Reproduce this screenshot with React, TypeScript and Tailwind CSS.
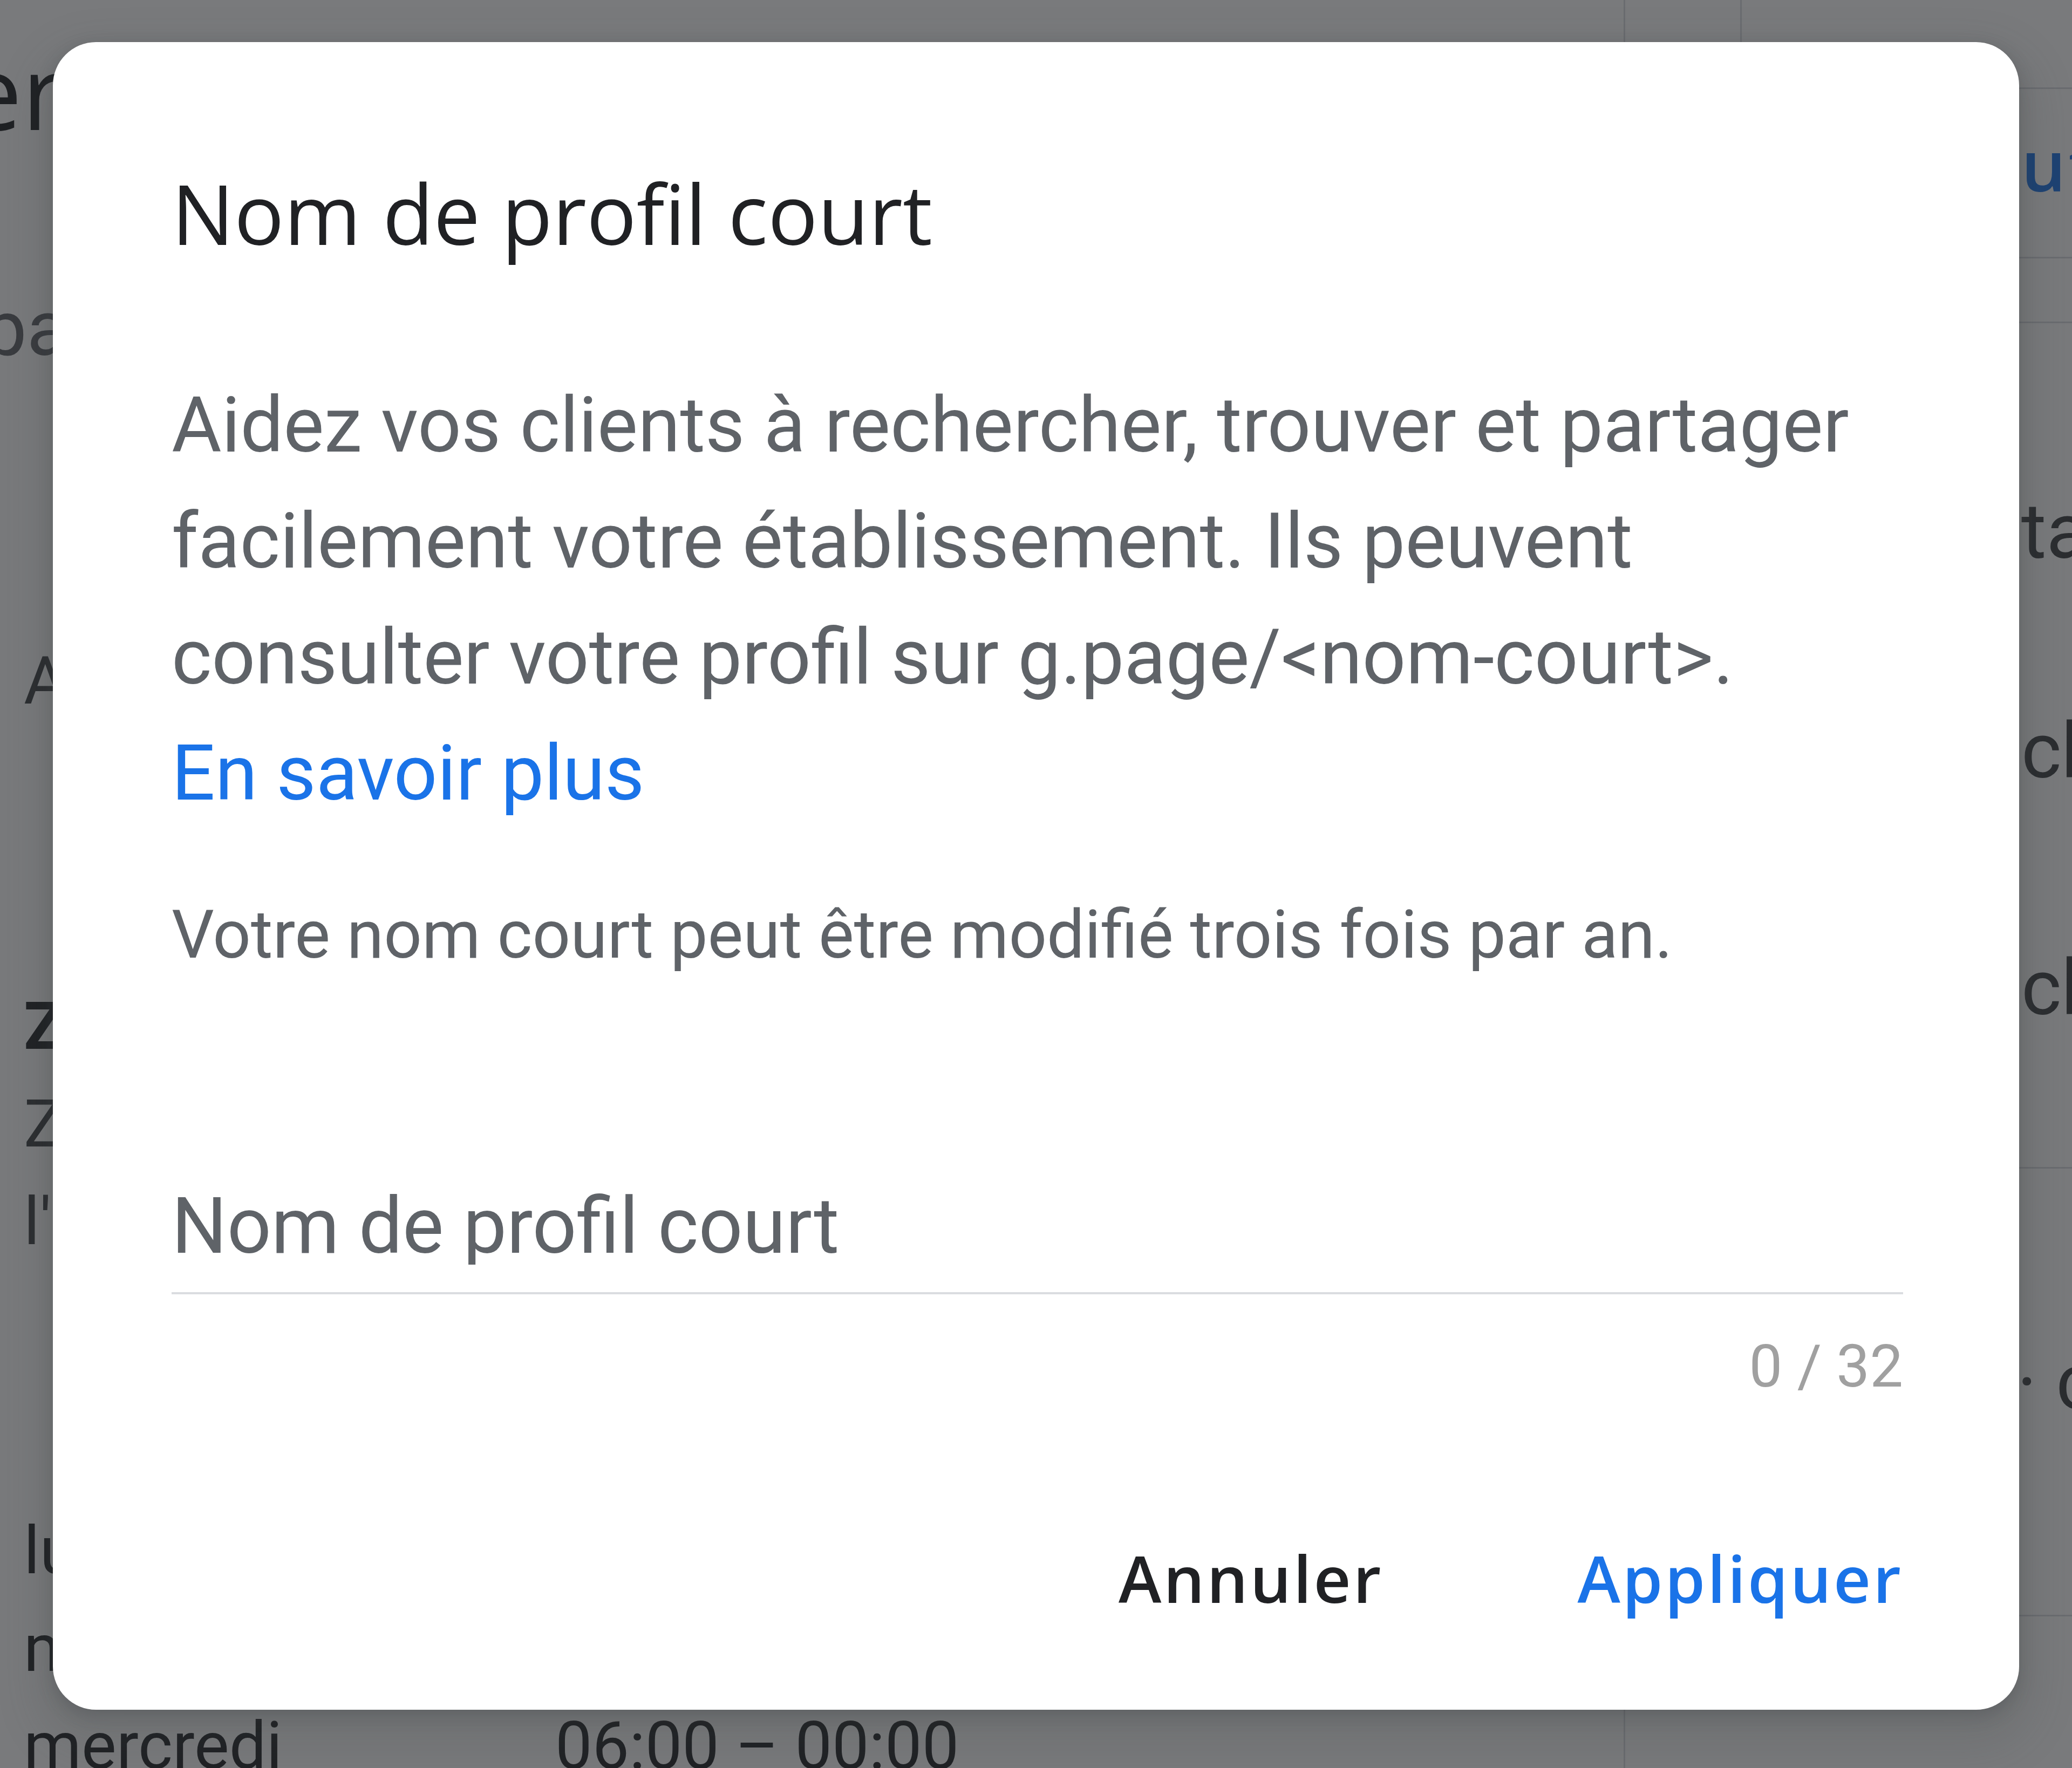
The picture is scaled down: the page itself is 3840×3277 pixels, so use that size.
import React from "react"

const roboto = "font-[Roboto,'Liberation_Sans',sans-serif]"
const gsans = "font-['Open_Sans','Liberation_Sans',sans-serif]"

function BackgroundPage() {
  return (
    <div className="flex h-full w-full">
      {/* main column */}
      <div className={`flex w-[3012px] shrink-0 flex-col border-r-[3px] border-[#dadce0] pl-[44px] ${roboto}`}>
        <div className={`ml-[-110px] mt-[73px] whitespace-nowrap text-[190px] leading-[190px] text-[#202124] ${gsans}`}>
          er
        </div>
        <div className="ml-[-74px] mt-[276px] whitespace-nowrap text-[142px] leading-[142px] text-[#5f6368]">
          pas
        </div>
        <div className="ml-[-44px] mt-[288px] h-[3px] w-[2968px] bg-[#dadce0]" />
        <div className="mt-[233px] whitespace-nowrap text-[122px] leading-[122px] text-[#3c4043]">
          Adr
        </div>
        <div className="mt-[488px] flex flex-col text-[122px] leading-[181px] text-[#202124]">
          <div className="font-bold">Zon</div>
          <div className="text-[#3c4043]">Zon</div>
          <div className="text-[#3c4043]">l'a</div>
        </div>
        <div className="mt-[429px] flex flex-col text-[122px] leading-[181px] text-[#202124]">
          {["lundi", "mardi", "mercredi"].map((day) => (
            <div key={day} className="flex whitespace-nowrap">
              <span className="w-[985px]">{day}</span>
              <span>06:00 – 00:00</span>
            </div>
          ))}
        </div>
      </div>

      {/* right column */}
      <div className="flex flex-1">
        <div className="h-[600px] w-[216px] shrink-0 border-r-[3px] border-[#dadce0]" />
        <div className={`flex flex-1 flex-col overflow-hidden ${roboto}`}>
          <div className="mt-[162px] h-[3px] bg-[#dadce0]" />
          <div className={`ml-[518px] mt-[75px] whitespace-nowrap text-[130px] font-semibold leading-[130px] tracking-[5px] text-[#1a73e8] ${gsans}`}>
            ut
          </div>
          <div className="mt-[106px] h-[3px] bg-[#dadce0]" />
          <div className="mt-[117px] h-[3px] bg-[#dadce0]" />
          <div className="ml-[518px] mt-[316px] whitespace-nowrap text-[142px] leading-[142px] text-[#3c4043]">ta</div>
          <div className="ml-[518px] mt-[265px] whitespace-nowrap text-[142px] leading-[142px] text-[#3c4043]">ch</div>
          <div className="ml-[518px] mt-[297px] whitespace-nowrap text-[142px] leading-[142px] text-[#3c4043]">ch</div>
          <div className="mt-[260px] h-[3px] bg-[#dadce0]" />
          <div className="ml-[510px] mt-[326px] whitespace-nowrap text-[142px] leading-[142px] text-[#3c4043]">· c</div>
          <div className="mt-[359px] h-[3px] bg-[#dadce0]" />
        </div>
      </div>
    </div>
  )
}

export default function App() {
  return (
    <div className="relative h-[3277px] w-[3840px] overflow-hidden bg-white">
      <BackgroundPage />

      {/* scrim */}
      <div className="absolute inset-0 bg-[rgba(32,33,36,0.6)]" />

      {/* dialog */}
      <div className="absolute left-[98px] top-[78px] w-[3644px] rounded-[80px] bg-white pb-[184px] pl-[220px] pr-[215px] pt-[239px] shadow-[0_10px_30px_rgba(60,64,67,0.3),0_40px_80px_30px_rgba(60,64,67,0.15)]">
        <h2 className={`text-[154px] font-normal leading-[154px] text-[#202124] ${gsans}`}>
          Nom de profil court
        </h2>

        <p className={`mt-[210px] text-[142px] leading-[215px] text-[#5f6368] ${roboto}`}>
          Aidez vos clients à rechercher, trouver et partager
          <br />
          facilement votre établissement. Ils peuvent
          <br />
          consulter votre profil sur g.page/&lt;nom-court&gt;.
          <br />
          <a href="#" className="text-[#1a73e8]">
            En savoir plus
          </a>
        </p>

        <p className={`mt-[130px] text-[124px] leading-[124px] text-[#5f6368] ${roboto}`}>
          Votre nom court peut être modifié trois fois par an.
        </p>

        <div className="mt-[405px]">
          <input
            type="text"
            placeholder="Nom de profil court"
            className={`block h-[144px] w-full bg-transparent p-0 text-[144px] leading-[144px] text-[#202124] outline-none placeholder:text-[#5f6368] ${roboto}`}
          />
          <div className="mt-[51px] h-[4px] w-full bg-[#dadce0]" />
        </div>

        <div className={`mt-[79px] text-right text-[110px] leading-[110px] text-[#a0a0a0] ${roboto}`}>
          0 / 32
        </div>

        <div className={`mt-[277px] flex justify-end gap-[360px] text-[120px] font-semibold leading-[120px] tracking-[4px] ${gsans}`}>
          <button className="text-[#202124]">Annuler</button>
          <button className="text-[#1a73e8]">Appliquer</button>
        </div>
      </div>
    </div>
  )
}
